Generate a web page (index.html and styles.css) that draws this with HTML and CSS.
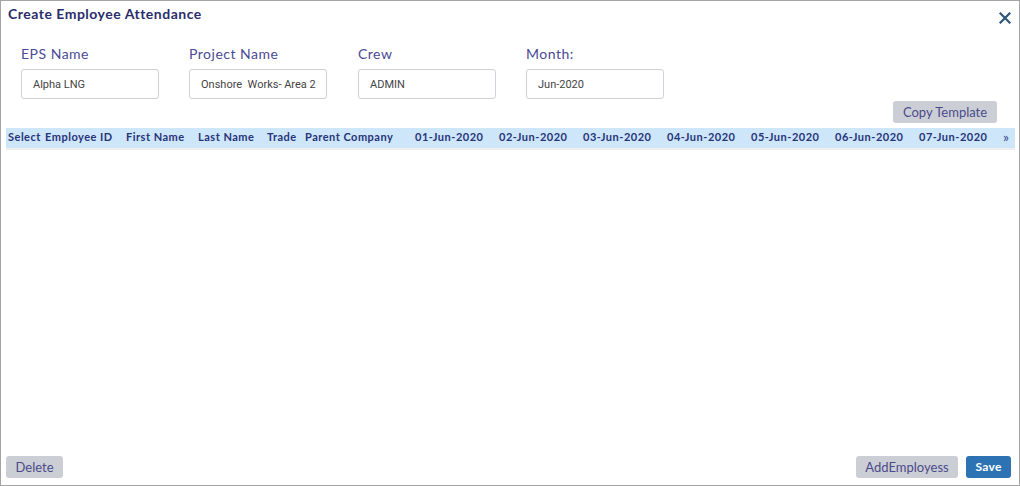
FILE: index.html
```html
<!DOCTYPE html>
<html>
<head>
<meta charset="utf-8">
<title>Create Employee Attendance</title>
<link rel="stylesheet" href="styles.css">
</head>
<body>
<div class="dialog">
  <div class="title-bar">
    <span class="title">Create Employee Attendance</span>
    <svg class="close" width="12" height="12" viewBox="0 0 12 12"><path d="M1.5 1.5 L10.5 10.5 M10.5 1.5 L1.5 10.5" stroke="#2f5677" stroke-width="2.2" stroke-linecap="square" fill="none"/></svg>
  </div>
  <div class="fields">
    <div class="field">
      <div class="label">EPS Name</div>
      <div class="input">Alpha LNG</div>
    </div>
    <div class="field">
      <div class="label">Project Name</div>
      <div class="input">Onshore&nbsp; Works- Area 2</div>
    </div>
    <div class="field">
      <div class="label">Crew</div>
      <div class="input">ADMIN</div>
    </div>
    <div class="field">
      <div class="label">Month:</div>
      <div class="input">Jun-2020</div>
    </div>
  </div>
  <div class="toolbar">
    <button class="btn btn-gray copy">Copy Template</button>
  </div>
  <div class="table-head">
    <span class="c c-sel">Select</span>
    <span class="c c-id">Employee ID</span>
    <span class="c c-fn">First Name</span>
    <span class="c c-ln">Last Name</span>
    <span class="c c-tr">Trade</span>
    <span class="c c-pc">Parent Company</span>
    <span class="c c-d">01-Jun-2020</span>
    <span class="c c-d">02-Jun-2020</span>
    <span class="c c-d">03-Jun-2020</span>
    <span class="c c-d">04-Jun-2020</span>
    <span class="c c-d">05-Jun-2020</span>
    <span class="c c-d">06-Jun-2020</span>
    <span class="c c-d">07-Jun-2020</span>
    <span class="c c-more">&raquo;</span>
  </div>
  <div class="table-line"></div>
  <div class="body-space"></div>
  <div class="footer">
    <button class="btn btn-gray del">Delete</button>
    <div class="footer-right">
      <button class="btn btn-gray add">AddEmployess</button>
      <button class="btn btn-blue save">Save</button>
    </div>
  </div>
</div>
</body>
</html>
```
FILE: styles.css
```css
html, body {
  margin: 0;
  padding: 0;
  background: #ffffff;
}
.dialog {
  box-sizing: border-box;
  width: 1020px;
  height: 486px;
  border: 1px solid #a4a4a4;
  display: flex;
  flex-direction: column;
  font-family: Lato, "Open Sans", sans-serif;
  background: #fff;
}
.title-bar {
  display: flex;
  justify-content: space-between;
  align-items: center;
  padding: 4px 8px 0 7px;
  height: 18px;
}
.title {
  font-size: 14px;
  font-weight: 700;
  line-height: 18px;
  letter-spacing: 0.5px;
  color: #2a2d6b;
}
.close {
  margin-top: 7px;
}
.fields {
  display: flex;
  padding-left: 20px;
  margin-top: 22px;
}
.field {
  display: flex;
  flex-direction: column;
  margin-right: 30px;
}
.field:nth-child(2) {
  margin-right: 31px;
}
.label {
  font-size: 14px;
  line-height: 18px;
  letter-spacing: 0.5px;
  color: #4a4a94;
  margin-bottom: 6px;
}
.input {
  box-sizing: border-box;
  width: 138px;
  height: 30px;
  border: 1px solid #cfcfd6;
  border-radius: 3px;
  padding-left: 11px;
  font-family: Roboto, "Liberation Sans", sans-serif;
  font-size: 11px;
  line-height: 29px;
  color: #444;
  white-space: nowrap;
  overflow: hidden;
}
.toolbar {
  display: flex;
  justify-content: flex-end;
  padding-right: 22px;
  margin-top: 2px;
}
.btn {
  box-sizing: border-box;
  border: none;
  border-radius: 3px;
  height: 22px;
  padding: 0;
  font-family: Lato, "Open Sans", sans-serif;
  font-size: 13px;
  line-height: 22px;
}
.btn-gray {
  background: #ccced6;
  color: #4b4b8a;
}
.btn-blue {
  background: #2d73b4;
  color: #fff;
  font-weight: 700;
  font-size: 12px;
  letter-spacing: 0.3px;
}
.copy { width: 104px; }
.table-head {
  display: flex;
  align-items: flex-start;
  margin: 5px 4px 0 5px;
  height: 20px;
  background: #cde6f9;
  padding-left: 2px;
  font-size: 11px;
  line-height: 18px;
  font-weight: 700;
  letter-spacing: 0.5px;
  color: #27337a;
  white-space: nowrap;
}
.c { display: block; flex: none; }
.c-sel { width: 37px; }
.c-id { width: 81px; }
.c-fn { width: 72px; }
.c-ln { width: 69px; }
.c-tr { width: 38px; }
.c-pc { width: 110px; }
.c-d { width: 84px; }
.c-more { width: 10px; font-weight: 400; font-size: 14px; line-height: 17px; color: #3a4a8a; }
.table-line {
  margin: 0 4px 0 5px;
  height: 2px;
  background: #efefef;
}
.body-space { flex: 1; }
.footer {
  display: flex;
  justify-content: space-between;
  align-items: flex-end;
  padding: 0 8px 7px 5px;
}
.footer-right {
  display: flex;
  gap: 8px;
}
.del { width: 57px; }
.add { width: 102px; }
.save { width: 45px; }
```
